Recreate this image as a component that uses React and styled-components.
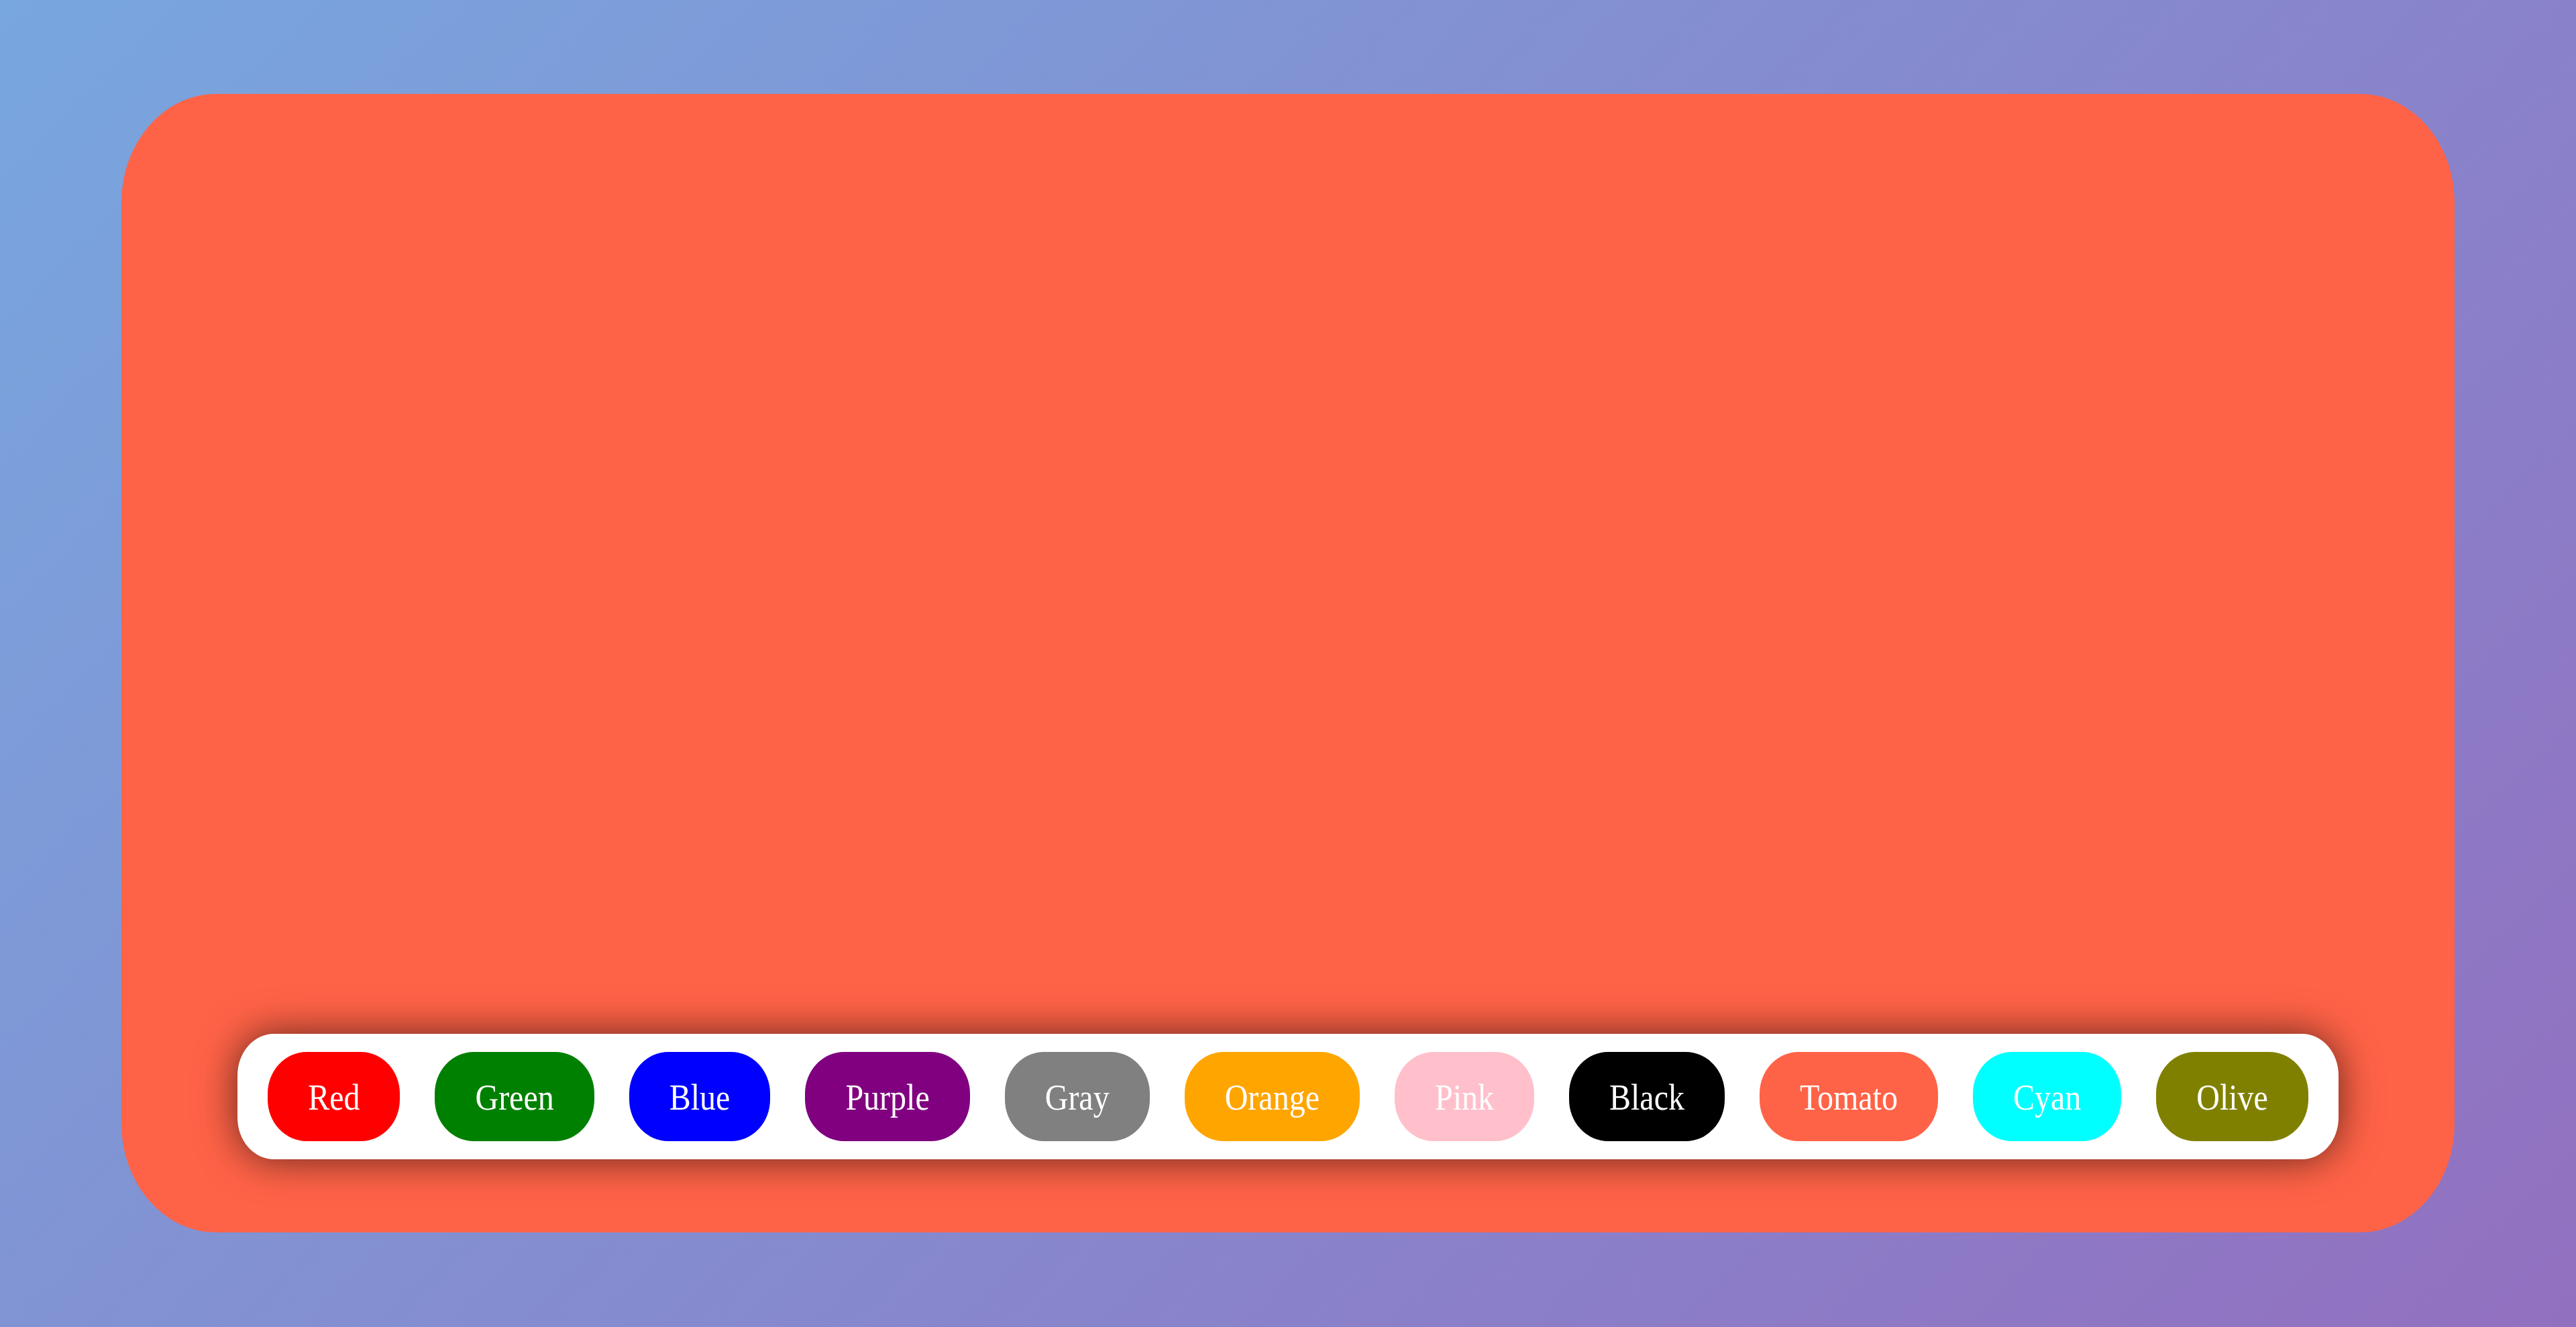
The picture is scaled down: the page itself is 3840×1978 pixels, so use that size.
import { useState } from 'react'
import styled, { createGlobalStyle } from 'styled-components'

const GlobalStyle = createGlobalStyle`
 html, body {
  margin: 0;
  padding: 0;
 }
 body {
  font-family: 'Liberation Serif', 'Times New Roman', serif;
 }
`

const Page = styled.div`
 box-sizing: border-box;
 height: 100vh;
 padding: 140px 181px 141px;
 display: flex;
 background: linear-gradient(135deg, #78a6de 0%, #9270c0 100%);
`

const Canvas = styled.div`
 flex: 1;
 display: flex;
 flex-direction: column;
 justify-content: flex-end;
 align-items: center;
 padding-bottom: 109px;
 border-radius: 141px / 162px;
 background-color: ${(props) => props.$color};
`

const Toolbar = styled.div`
 display: flex;
 gap: 52px;
 padding: 27px 45px;
 background-color: white;
 border-radius: 54px / 62px;
 box-shadow: 0 0 60px rgba(0, 0, 0, 0.62);
`

const ColorButton = styled.button`
 border: none;
 margin: 0;
 padding: 39px 60px;
 border-radius: 58px / 62px;
 background-color: ${(props) => props.$color};
 color: white;
 font-family: 'Liberation Serif', 'Times New Roman', serif;
 font-size: 48px;
 line-height: 55px;
 cursor: pointer;
`

const Label = styled.span`
 display: inline-block;
 transform: scaleY(1.16);
`

const colors = [
 'Red',
 'Green',
 'Blue',
 'Purple',
 'Gray',
 'Orange',
 'Pink',
 'Black',
 'Tomato',
 'Cyan',
 'Olive',
]

function App() {
 const [color, setColor] = useState('tomato')

 return (
  <>
   <GlobalStyle />
   <Page>
    <Canvas $color={color}>
     <Toolbar>
      {colors.map((name) => (
       <ColorButton
        key={name}
        $color={name.toLowerCase()}
        onClick={() => setColor(name.toLowerCase())}
       >
        <Label>{name}</Label>
       </ColorButton>
      ))}
     </Toolbar>
    </Canvas>
   </Page>
  </>
 )
}

export default App
